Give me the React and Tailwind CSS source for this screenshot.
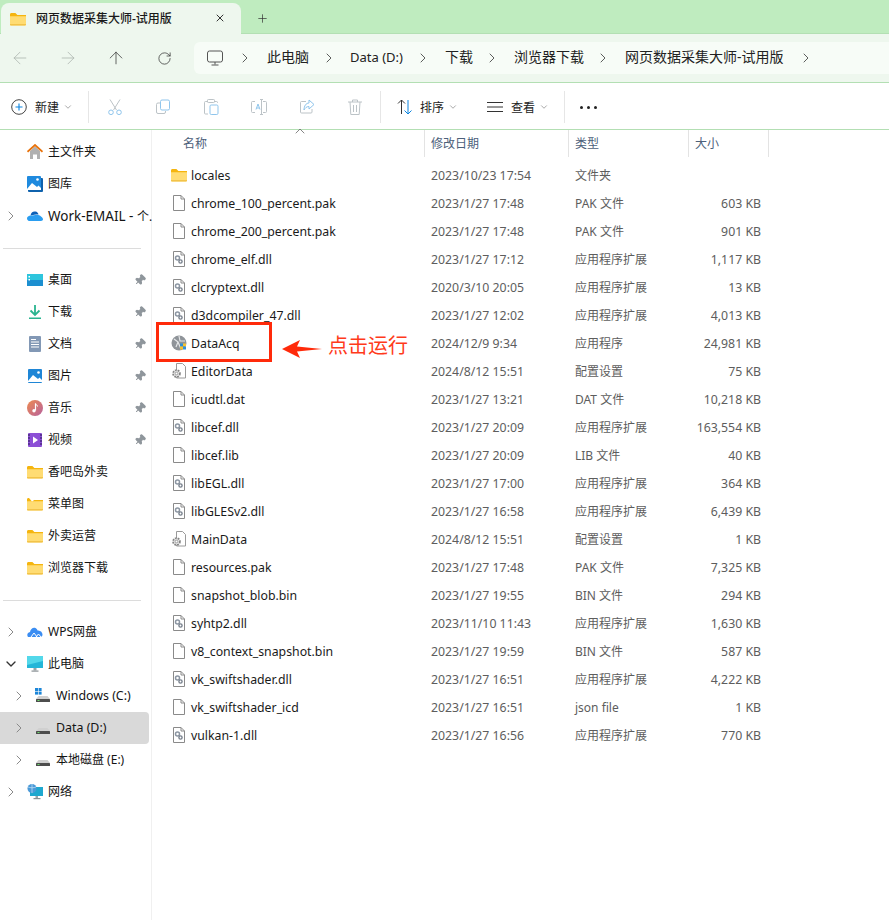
import { ArrowLeft, ArrowRight, ArrowUp, RotateCw, ChevronRight, ChevronDown, ChevronUp, Plus, X, Pin } from 'lucide-react'

const files = [
  ['folder', 'locales', '2023/10/23 17:54', '文件夹', ''],
  ['file', 'chrome_100_percent.pak', '2023/1/27 17:48', 'PAK 文件', '603 KB'],
  ['file', 'chrome_200_percent.pak', '2023/1/27 17:48', 'PAK 文件', '901 KB'],
  ['dll', 'chrome_elf.dll', '2023/1/27 17:12', '应用程序扩展', '1,117 KB'],
  ['dll', 'clcryptext.dll', '2020/3/10 20:05', '应用程序扩展', '13 KB'],
  ['dll', 'd3dcompiler_47.dll', '2023/1/27 12:02', '应用程序扩展', '4,013 KB'],
  ['app', 'DataAcq', '2024/12/9 9:34', '应用程序', '24,981 KB'],
  ['cfg', 'EditorData', '2024/8/12 15:51', '配置设置', '75 KB'],
  ['file', 'icudtl.dat', '2023/1/27 13:21', 'DAT 文件', '10,218 KB'],
  ['dll', 'libcef.dll', '2023/1/27 20:09', '应用程序扩展', '163,554 KB'],
  ['file', 'libcef.lib', '2023/1/27 20:09', 'LIB 文件', '40 KB'],
  ['dll', 'libEGL.dll', '2023/1/27 17:00', '应用程序扩展', '364 KB'],
  ['dll', 'libGLESv2.dll', '2023/1/27 16:58', '应用程序扩展', '6,439 KB'],
  ['cfg', 'MainData', '2024/8/12 15:51', '配置设置', '1 KB'],
  ['file', 'resources.pak', '2023/1/27 17:48', 'PAK 文件', '7,325 KB'],
  ['file', 'snapshot_blob.bin', '2023/1/27 19:55', 'BIN 文件', '294 KB'],
  ['dll', 'syhtp2.dll', '2023/11/10 11:43', '应用程序扩展', '1,630 KB'],
  ['file', 'v8_context_snapshot.bin', '2023/1/27 19:59', 'BIN 文件', '587 KB'],
  ['dll', 'vk_swiftshader.dll', '2023/1/27 16:51', '应用程序扩展', '4,222 KB'],
  ['file', 'vk_swiftshader_icd', '2023/1/27 16:51', 'json file', '1 KB'],
  ['dll', 'vulkan-1.dll', '2023/1/27 16:56', '应用程序扩展', '770 KB'],
]

const crumbs = [
  ['此电脑', 'w-[72px] pl-[16px] -mt-[3px] text-[14px]'],
  ['Data (D:)', 'w-[82px] pl-[15px] text-[13px]'],
  ['下载', 'w-[57px] pl-[16px] -mt-[3px] text-[14px]'],
  ['浏览器下载', 'w-[99px] pl-[16px] -mt-[3px] text-[14px]'],
  ['网页数据采集大师-试用版', 'w-[191px] pl-[16px] -mt-[3px] text-[14px]'],
]

const FolderIcon = ({ open }) => (
  <svg width="16" height="16" viewBox="0 0 16 16">
    <path d="M0 3.5C0 2.7.6 2 1.4 2h4l2 2H16v2H0z" fill="#f5b50f" />
    <path d="M0 5.2h16v8.3c0 .6-.5 1-1 1H1c-.6 0-1-.4-1-1z" fill="#ffdc73" />
    <path d="M0 13h16v.6c0 .6-.5.9-1 .9H1c-.6 0-1-.3-1-.9z" fill="#f2c34a" />
    {open && <path d="M2 2l3 3.5 3-2-1-1.5z" fill="#fff" />}
  </svg>
)

const PageIcon = ({ children }) => (
  <svg width="16" height="16" viewBox="0 0 16 16">
    <path d="M2.5.5h7.5l3.5 3.5v11.5h-11z" fill="#fff" stroke="#8a8a8a" />
    <path d="M10 .5v3.5h3.5" fill="none" stroke="#8a8a8a" />
    {children}
  </svg>
)

const FileIcon = ({ type }) => {
  if (type === 'folder') return <FolderIcon />
  if (type === 'file') return <PageIcon />
  if (type === 'dll') {
    return (
      <PageIcon>
        <circle cx="6.5" cy="7" r="2" fill="none" stroke="#8c96a3" strokeWidth="1.5" />
        <circle cx="9.5" cy="10.5" r="1.6" fill="none" stroke="#77808c" strokeWidth="1.4" />
      </PageIcon>
    )
  }
  if (type === 'cfg') {
    return (
      <svg width="16" height="16" viewBox="0 0 16 16">
        <path d="M5.5.5h6l3 3v11.5h-9z" fill="#fff" stroke="#9a9a9a" />
        <circle cx="5.5" cy="10.5" r="3.4" fill="#e6e6e6" stroke="#858585" strokeWidth="1.8" strokeDasharray="1.8 1" />
        <circle cx="5.5" cy="10.5" r="1.3" fill="#fff" stroke="#858585" strokeWidth=".7" />
      </svg>
    )
  }
  return (
    <svg width="16" height="16" viewBox="0 0 16 16">
      <circle cx="8" cy="8" r="7.5" fill="#8f9499" />
      <path d="M3 4l4 3-2 5M8 1l1 5 5 0M7 7l3 7" fill="none" stroke="#e4e6e8" strokeWidth="1.2" />
      <rect x="9" y="8.5" width="3" height="3" fill="#2f8fd8" />
      <rect x="12" y="8.5" width="3" height="3" fill="#f7c22f" />
      <rect x="9" y="11.5" width="3" height="3" fill="#f7c22f" />
      <rect x="12" y="11.5" width="3" height="3" fill="#2f8fd8" />
    </svg>
  )
}

const NavIcon = ({ name }) => {
  if (name === 'home') {
    return (
      <svg width="16" height="16" viewBox="0 0 16 16">
        <path d="M3 7l5-4.500L13 7v8H10v-4.500H6V15H3z" fill="#b0b0b0" />
        <path d="M.5 7.800L8 1l7.500 6.800" fill="none" stroke="#e8730c" strokeWidth="1.800" />
      </svg>
    )
  }
  if (name === 'gallery') {
    return (
      <svg width="16" height="16" viewBox="0 0 16 16">
        <rect x="1" y="2" width="15" height="14" rx="1" fill="#0f62ad" />
        <rect x="0" y="0" width="14" height="14" rx="1" fill="#1f8ade" />
        <path d="M0 13l5-6 5 4 1.500-1.500L14 12v2H0z" fill="#fff" />
        <circle cx="10.500" cy="3.500" r="1.300" fill="#fff" />
      </svg>
    )
  }
  if (name === 'pics') {
    return (
      <svg width="16" height="16" viewBox="0 0 16 16">
        <rect x="1" y="1" width="14" height="14" rx="1" fill="#1f86d6" />
        <path d="M1 13l5-6 5 4 1.500-1.500L15 12v2H1z" fill="#fff" />
        <circle cx="11.500" cy="4.500" r="1.300" fill="#fff" />
      </svg>
    )
  }
  if (name === 'cloud') {
    return (
      <svg width="16" height="16" viewBox="0 0 16 16">
        <path d="M3.500 7.500C4 4.500 6 3 8.500 3.500c1.500.3 2.500 1.300 3 3-3 0-6 .5-8 1z" fill="#0b5fb8" />
        <path d="M3 13c-1.800 0-3-1.200-3-2.600C0 9 1.500 7.500 4 7.500c3 0 8-1.500 10 1 1.500 1 2 2 2 2.800 0 1-.9 1.700-2 1.700z" fill="#2a9df0" />
      </svg>
    )
  }
  if (name === 'desktop') {
    return (
      <svg width="16" height="16" viewBox="0 0 16 16">
        <rect x="0" y="2" width="16" height="12" fill="#1c8fd0" />
        <rect x="0" y="2" width="16" height="6" fill="#2ec5dd" />
        <rect x="1.500" y="4" width="1.500" height="1.500" fill="#fff" />
        <rect x="1.500" y="7" width="1.500" height="1.500" fill="#fff" />
      </svg>
    )
  }
  if (name === 'down') {
    return (
      <svg width="16" height="16" viewBox="0 0 16 16">
        <path d="M8 1v9M3.500 6.500L8 11l4.500-4.500" fill="none" stroke="#29b48f" strokeWidth="1.800" />
        <rect x="2" y="13.500" width="12" height="1.500" fill="#29b48f" />
      </svg>
    )
  }
  if (name === 'docs') {
    return (
      <svg width="16" height="16" viewBox="0 0 16 16">
        <rect x="2" y="0" width="12" height="16" rx="1" fill="#8298b5" />
        <path d="M4 3.500h5M4 6h8M4 8.500h8M4 11h8" stroke="#fff" strokeWidth="1.100" />
      </svg>
    )
  }
  if (name === 'music') {
    return (
      <svg width="16" height="16" viewBox="0 0 16 16">
        <defs>
          <linearGradient id="mus" x1="0" y1="0" x2="1" y2="1">
            <stop offset="0" stopColor="#ee8a4f" />
            <stop offset="1" stopColor="#b7629e" />
          </linearGradient>
        </defs>
        <circle cx="8" cy="8" r="8" fill="url(#mus)" />
        <path d="M8.500 3.500v7" stroke="#fff" strokeWidth="1.200" />
        <circle cx="7" cy="10.800" r="1.700" fill="#fff" />
        <path d="M8.500 3.500c.5 1.500 2 1.500 2 3" fill="none" stroke="#fff" strokeWidth="1" />
      </svg>
    )
  }
  if (name === 'video') {
    return (
      <svg width="16" height="16" viewBox="0 0 16 16">
        <rect x="1" y="1" width="14" height="14" rx="1" fill="#8c4fd6" />
        <path d="M1 3h2M1 6h2M1 9h2M1 12h2M13 3h2M13 6h2M13 9h2M13 12h2" stroke="#2b1a55" strokeWidth="1.200" />
        <path d="M6 4.500l5 3.500-5 3.500z" fill="#fff" />
      </svg>
    )
  }
  if (name === 'wps') {
    return (
      <svg width="16" height="16" viewBox="0 0 16 16">
        <path d="M1 13c-1.500-2-.5-4.500 2-5 .5-3 3-5 5.500-4 1 .5 1.500 1 2 2.500 3-.5 5 2 5 4 0 1.500-.8 2.500-2 2.500z" fill="#3b8df2" />
        <path d="M4 13l3-4 3 4M9 13l2.500-3 2.500 3" fill="none" stroke="#fff" strokeWidth="1" />
      </svg>
    )
  }
  if (name === 'pc') {
    return (
      <svg width="16" height="16" viewBox="0 0 16 16">
        <rect x="0" y="0" width="16" height="12" rx=".5" fill="#24b6d8" />
        <path d="M0 0h16v5L0 9z" fill="#53d8ea" />
        <rect x="6.500" y="12" width="3" height="2.500" fill="#9aa4a8" />
        <rect x="4.500" y="14.500" width="7" height="1.200" fill="#8a9296" />
      </svg>
    )
  }
  if (name === 'network') {
    return (
      <svg width="16" height="16" viewBox="0 0 16 16">
        <rect x="3" y="3" width="13" height="9" fill="#1fa8cf" />
        <circle cx="5" cy="4.500" r="4.500" fill="#4b9ad8" />
        <path d="M1 3c2 1 6 1 8 0M5 0v9" stroke="#c8e4f6" strokeWidth=".7" fill="none" />
        <rect x="8.500" y="12" width="2.500" height="2" fill="#9aa4a8" />
        <rect x="6.500" y="14" width="7" height="1.200" fill="#8a9296" />
      </svg>
    )
  }
  if (name === 'driveC' || name === 'drive') {
    return (
      <svg width="16" height="16" viewBox="0 0 16 16">
        {name === 'driveC' && (
          <g fill="#1c86d8">
            <rect x="0" y="0" width="3" height="3" />
            <rect x="3.600" y="0" width="3" height="3" />
            <rect x="0" y="3.600" width="3" height="3" />
            <rect x="3.600" y="3.600" width="3" height="3" />
          </g>
        )}
        <path d="M3.500 8h9l2.500 3H1z" fill="#d0d0d0" />
        <rect x="1" y="11" width="14" height="3" rx=".5" fill="#4d4d4d" />
        <rect x="2.500" y="12" width="2" height="1" fill="#6fdc6f" />
      </svg>
    )
  }
  return <FolderIcon open={name === 'open'} />
}

const NavRow = ({ icon, label, arrow, level, pinned, selected, size = 'text-[12px]' }) => (
  <div className={`flex h-8 w-[149px] items-center rounded-r ${selected ? 'bg-[#d9d9d9]' : ''} ${level ? 'pl-[13px]' : 'pl-[5px]'}`}>
    <span className="flex w-[11px] justify-center text-[#8a8a8a]">
      {arrow === 'right' && <ChevronRight size={16} strokeWidth={1.500} className="shrink-0" />}
      {arrow === 'down' && <ChevronDown size={16} strokeWidth={2} className="shrink-0 text-[#333]" />}
    </span>
    <span className="ml-[11px] flex w-4 shrink-0 items-center justify-center">
      <NavIcon name={icon} />
    </span>
    <span className={`ml-[5px] flex-1 whitespace-nowrap text-[#141414] ${size}`}>{label}</span>
    {pinned && <Pin size={12} className="mr-[3px] rotate-45 fill-[#8f969c] text-[#8f969c]" />}
  </div>
)

const Disabled = ({ children }) => (
  <svg width="16" height="16" viewBox="0 0 16 16" fill="none" strokeWidth="1">
    {children}
  </svg>
)

const ToolIcons = () => (
  <div className="ml-[18px] flex gap-[32px]">
    <Disabled>
      <path d="M3 .5l6.500 10.500M13 .5L6.500 11" stroke="#bcc3c7" />
      <circle cx="4" cy="13.300" r="2.300" stroke="#8fc5ec" />
      <circle cx="12" cy="13.300" r="2.300" stroke="#8fc5ec" />
    </Disabled>
    <Disabled>
      <rect x="5.500" y="1" width="9" height="10" rx="1.500" stroke="#8fc5ec" />
      <path d="M5 4H3a1.500 1.500 0 0 0-1.500 1.500V13A1.500 1.500 0 0 0 3 14.500h6A1.500 1.500 0 0 0 10.500 13v-1" stroke="#bcc3c7" />
    </Disabled>
    <Disabled>
      <path d="M5 2.500H2.500A1 1 0 0 0 1.500 3.500V14a1 1 0 0 0 1 1H5M11 2.500h2.500a1 1 0 0 1 1 1V4" stroke="#bcc3c7" />
      <rect x="4.500" y=".5" width="7" height="3" rx=".8" stroke="#bcc3c7" />
      <rect x="7" y="6" width="8" height="9.500" rx="1.200" stroke="#8fc5ec" />
    </Disabled>
    <Disabled>
      <path d="M4 2.500H1.500a1 1 0 0 0-1 1v9a1 1 0 0 0 1 1H4M12 2.500h2.500a1 1 0 0 1 1 1v9a1 1 0 0 1-1 1H12" stroke="#bcc3c7" />
      <path d="M5 10.500L7 5l2 5.500M5.700 9h2.600" stroke="#8fc5ec" />
      <path d="M9 .5h3M10.500.5v15M9 15.500h3" stroke="#bcc3c7" />
    </Disabled>
    <Disabled>
      <path d="M7 2.500H2.500a1 1 0 0 0-1 1V13a1 1 0 0 0 1 1H12a1 1 0 0 0 1-1v-3" stroke="#bcc3c7" />
      <path d="M10 1l5 4.500L10 10V7.500C7.500 7.500 6 9 5 11c0-4 2-7 5-7z" stroke="#8fc5ec" />
    </Disabled>
    <Disabled>
      <path d="M1 3h14M5.500 3V1h5v2M3 3l.8 12.500h8.400L13 3M6.500 6v7M9.500 6v7" stroke="#bcc3c7" />
    </Disabled>
  </div>
)

const Crumb = ({ label, cls }) => (
  <>
    <ChevronRight size={16} strokeWidth={1.200} className="-mx-[2px] shrink-0 text-[#333]" />
    <span className={`shrink-0 text-[#222] ${cls}`}>{label}</span>
  </>
)

const App = () => {
  return (
    <div className="flex h-[920px] w-[889px] flex-col overflow-hidden bg-white font-['Noto_Sans','Noto_Sans_CJK_SC',sans-serif]">
      <div className="flex h-[34px] shrink-0 items-end border-b border-[#b3dfb3] bg-[#bfecbf]">
        <div className="relative z-10 ml-px -mb-px flex h-[31px] w-[240px] items-center rounded-t-lg bg-[#eef7ee] pl-[9px]">
          <FolderIcon />
          <span className="ml-[10px] text-[12px] font-medium text-[#1a1a1a]">网页数据采集大师-试用版</span>
          <X size={12} className="absolute left-[213px] top-[9px] text-[#333]" />
        </div>
        <Plus size={13} strokeWidth={1.300} className="mb-[8px] ml-[15px] text-[#333]" />
      </div>

      <div className="flex h-[49px] shrink-0 items-center border-b border-[#b3dfb3] bg-[#eef7ee]">
        <div className="flex w-[194px] shrink-0 items-center gap-[28px] pl-[10px]">
          <ArrowLeft size={20} strokeWidth={0.900} className="text-[#a8b0aa]" />
          <ArrowRight size={20} strokeWidth={0.900} className="text-[#a8b0aa]" />
          <ArrowUp size={20} strokeWidth={0.900} className="text-[#333]" />
          <span className="flex w-5 justify-center">
            <RotateCw size={15} strokeWidth={1.200} className="text-[#333]" />
          </span>
        </div>
        <div className="flex h-8 flex-1 items-center rounded-l-md bg-[#f7fcf7] pl-[13px]">
          <svg width="16" height="16" viewBox="0 0 16 16" fill="none" stroke="#555" className="mr-[16px] shrink-0">
            <rect x=".5" y="1" width="15" height="11" rx="2" />
            <path d="M8 12v2.500M4.500 15h7" />
          </svg>
          {crumbs.map(([label, cls]) => (
            <Crumb key={label} label={label} cls={cls} />
          ))}
          <ChevronRight size={16} strokeWidth={1.200} className="-mx-[2px] shrink-0 text-[#333]" />
        </div>
      </div>

      <div className="flex h-[47px] shrink-0 items-center border-b border-[#b3dfb3] bg-white pt-[2px]">
        <svg width="16" height="16" viewBox="0 0 16 16" fill="none" className="ml-[11px] shrink-0">
          <circle cx="8" cy="8" r="7.300" stroke="#444" />
          <path d="M8 4.500v7M4.500 8h7" stroke="#0a84e0" strokeWidth="1.100" />
        </svg>
        <span className="ml-[8px] mt-[2px] text-[12px] text-[#222]">新建</span>
        <ChevronDown size={10} className="ml-[4px] text-[#999]" />
        <div className="ml-[15px] h-8 w-px bg-[#e6e6e6]" />
        <ToolIcons />
        <div className="ml-[17px] h-8 w-px bg-[#e6e6e6]" />
        <svg width="16" height="16" viewBox="0 0 16 16" fill="none" className="ml-[16px] shrink-0">
          <path d="M4.500 15V1M1 4.500L4.500 1 8 4.500" stroke="#333" />
          <path d="M11 1v14M7.500 11.500L11 15l3.500-3.500" stroke="#0a84e0" />
        </svg>
        <span className="ml-[7px] mt-[2px] text-[12px] text-[#222]">排序</span>
        <ChevronDown size={10} className="ml-[4px] text-[#999]" />
        <svg width="16" height="16" viewBox="0 0 16 16" fill="none" stroke="#333" className="ml-[29px] shrink-0">
          <path d="M0 3.500h16M0 8h16M0 12.500h16" />
        </svg>
        <span className="ml-[8px] mt-[2px] text-[12px] text-[#222]">查看</span>
        <ChevronDown size={10} className="ml-[4px] text-[#999]" />
        <div className="ml-[15px] h-8 w-px bg-[#e6e6e6]" />
        <div className="ml-[15px] flex gap-[4px]">
          <span className="h-[3px] w-[3px] rounded-full bg-[#222]" />
          <span className="h-[3px] w-[3px] rounded-full bg-[#222]" />
          <span className="h-[3px] w-[3px] rounded-full bg-[#222]" />
        </div>
      </div>

      <div className="flex flex-1">
        <div className="w-[152px] shrink-0 border-r border-[#f0f0f0] pt-[6px]">
          <NavRow icon="home" label="主文件夹" />
          <NavRow icon="gallery" label="图库" />
          <NavRow
            icon="cloud"
            label={<><span className="text-[13.500px]">Work-EMAIL - </span>个.</>}
            arrow="right"
          />
          <div className="mt-[16px] mb-[15px] ml-[3px] h-px w-[138px] bg-[#dcdcdc]" />
          <NavRow icon="desktop" label="桌面" pinned />
          <NavRow icon="down" label="下载" pinned />
          <NavRow icon="docs" label="文档" pinned />
          <NavRow icon="pics" label="图片" pinned />
          <NavRow icon="music" label="音乐" pinned />
          <NavRow icon="video" label="视频" pinned />
          <NavRow icon="folder" label="香吧岛外卖" />
          <NavRow icon="open" label="菜单图" />
          <NavRow icon="folder" label="外卖运营" />
          <NavRow icon="folder" label="浏览器下载" />
          <div className="mt-[16px] mb-[15px] ml-[3px] h-px w-[138px] bg-[#dcdcdc]" />
          <NavRow icon="wps" label="WPS网盘" arrow="right" />
          <NavRow icon="pc" label="此电脑" arrow="down" />
          <NavRow icon="driveC" label="Windows (C:)" arrow="right" level size="text-[12.400px]" />
          <NavRow icon="drive" label="Data (D:)" arrow="right" level selected size="text-[12.400px]" />
          <NavRow icon="drive" label="本地磁盘 (E:)" arrow="right" level />
          <NavRow icon="network" label="网络" arrow="right" />
        </div>

        <div className="relative flex-1">
          <ChevronUp size={16} strokeWidth={1.200} className="absolute left-[140px] top-[-7px] text-[#666]" />
          <div className="grid h-[27px] grid-cols-[273px_144px_120px_80px] items-stretch text-[12px] text-[#4c607a]">
            <div className="flex items-center border-r border-[#e3e3e3] pl-[31px]">名称</div>
            <div className="flex items-center border-r border-[#e3e3e3] pl-[6px]">修改日期</div>
            <div className="flex items-center border-r border-[#e3e3e3] pl-[6px]">类型</div>
            <div className="flex items-center border-r border-[#e3e3e3] pl-[6px]">大小</div>
          </div>

          <div className="pt-[5px]">
            {files.map(([type, name, date, kind, size]) => (
              <div key={name} className="relative grid h-7 grid-cols-[272px_144px_120px_80px] items-center text-[12px]">
                <div className="flex items-center gap-1 pl-[19px] text-[#1a1a1a]">
                  <span className="-mt-[2px]">
                    <FileIcon type={type} />
                  </span>
                  <span className="text-[12.300px]">{name}</span>
                </div>
                <div className="pl-[7px] text-[12.300px] text-[#5d5d5d]">{date}</div>
                <div className="pl-[7px] text-[#5d5d5d]">{kind}</div>
                <div className="pr-[7px] text-right text-[12.300px] text-[#5d5d5d]">{size}</div>
                {name === 'DataAcq' && (
                  <>
                    <div className="absolute left-[4px] top-[-8px] h-[40px] w-[116px] border-[3px] border-[#ff2a0a]" />
                    <svg width="40" height="18" viewBox="0 0 40 18" className="absolute left-[130px] top-[10px]">
                      <path d="M0 9L18 0l-3 6.500L40 9l-25 2.500 3 6.500z" fill="#ff2a0a" />
                    </svg>
                    <span className="absolute left-[176px] top-[2px] text-[20px] leading-[28px] text-[#ff3a1a]">点击运行</span>
                  </>
                )}
              </div>
            ))}
          </div>
        </div>
      </div>
    </div>
  )
}

export default App
